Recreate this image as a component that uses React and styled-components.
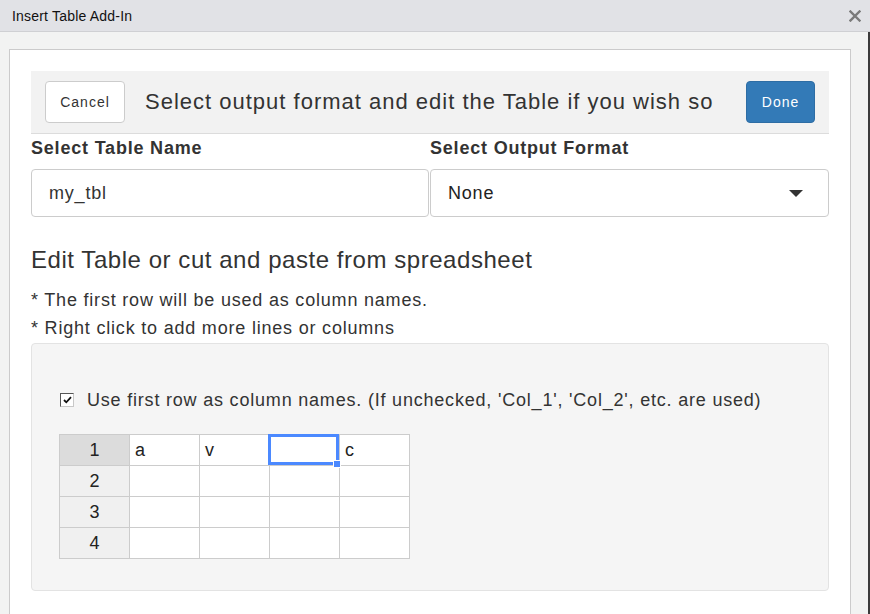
import React from 'react';
import styled, { createGlobalStyle } from 'styled-components';

const GlobalStyle = createGlobalStyle`
  html, body {
    margin: 0;
    padding: 0;
    height: 100%;
    overflow: hidden;
    background: #f2f3f2;
  }
  #root {
    height: 100%;
  }
  * {
    box-sizing: border-box;
  }
`;

const rows = [
  ['a', 'v', '', 'c'],
  ['', '', '', ''],
  ['', '', '', ''],
  ['', '', '', ''],
];

function App() {
  return (
    <Window>
      <GlobalStyle />
      <TitleBar>
        <TitleText>Insert Table Add-In</TitleText>
        <CloseButton>
          <svg width="12" height="12" viewBox="0 0 12 12">
            <path d="M1.5 1.5 L10.5 10.5 M10.5 1.5 L1.5 10.5" stroke="#7a7a7a" strokeWidth="2.4" strokeLinecap="square" />
          </svg>
        </CloseButton>
      </TitleBar>

      <Frame>
        <Panel>
          {/* top bar with the two buttons */}
          <Toolbar>
            <CancelButton>Cancel</CancelButton>
            <ToolbarTitle>Select output format and edit the Table if you wish so</ToolbarTitle>
            <DoneButton>Done</DoneButton>
          </Toolbar>

          <FieldGrid>
            <Field>
              <Label>Select Table Name</Label>
              <TextInput>my_tbl</TextInput>
            </Field>
            <Field>
              <Label>Select Output Format</Label>
              <SelectBox>
                <span>None</span>
                <Caret />
              </SelectBox>
            </Field>
          </FieldGrid>

          <Heading>Edit Table or cut and paste from spreadsheet</Heading>
          <Notes>
            <Note>* The first row will be used as column names.</Note>
            <Note>* Right click to add more lines or columns</Note>
          </Notes>

          {/* table editor */}
          <Well>
            <CheckRow>
              <CheckBox>
                <svg width="9" height="8" viewBox="0 0 9 8">
                  <path d="M1 4 L3.3 6.3 L8 1.2" stroke="#111" strokeWidth="1.8" fill="none" />
                </svg>
              </CheckBox>
              <span>Use first row as column names. (If unchecked, 'Col_1', 'Col_2', etc. are used)</span>
            </CheckRow>

            <Grid>
              <tbody>
                {rows.map((row, r) => (
                  <tr key={r}>
                    <RowHead $active={r === 0}>{r + 1}</RowHead>
                    {row.map((val, c) => (
                      <Cell key={c}>
                        {val}
                        {r === 0 && c === 2 && (
                          <Selection>
                            <Handle />
                          </Selection>
                        )}
                      </Cell>
                    ))}
                  </tr>
                ))}
              </tbody>
            </Grid>
          </Well>
        </Panel>
      </Frame>
    </Window>
  );
}

export default App;

const Window = styled.div`
  height: 100%;
  display: flex;
  flex-direction: column;
  font-family: "Liberation Sans", Arial, sans-serif;
  color: #333;
`;

const TitleBar = styled.div`
  height: 32px;
  flex: none;
  display: flex;
  align-items: center;
  justify-content: space-between;
  padding: 0 9px 0 12px;
  background: #e1e2e6;
  border-bottom: 1px solid #cfd0d3;
`;

const TitleText = styled.div`
  font-family: "Liberation Sans", sans-serif;
  font-size: 14px;
  letter-spacing: 0.2px;
  color: #111;
  margin-top: 1px;
`;

const CloseButton = styled.div`
  display: flex;
  align-items: center;
  margin-top: 1px;
`;

const Frame = styled.div`
  flex: 1;
  display: flex;
  padding: 17px 17px 0 9px;
  border-right: 2px solid #3b3b3b;
  min-height: 0;
`;

const Panel = styled.div`
  flex: 1;
  background: #fff;
  border: 1px solid #cbcbcb;
  border-bottom: none;
  padding: 21px 21px 0 21px;
`;

const Toolbar = styled.div`
  height: 63px;
  display: flex;
  align-items: center;
  padding: 0 14px;
  background: #f2f2f2;
  border-bottom: 1px solid #dcdcdc;
`;

const BaseButton = styled.div`
  height: 42px;
  display: flex;
  align-items: center;
  justify-content: center;
  border-radius: 4px;
  font-size: 14px;
  letter-spacing: 1px;
`;

const CancelButton = styled(BaseButton)`
  width: 80px;
  background: #fff;
  border: 1px solid #ccc;
  color: #333;
`;

const DoneButton = styled(BaseButton)`
  width: 69px;
  background: #337ab7;
  border: 1px solid #2e6da4;
  color: #fff;
`;

const ToolbarTitle = styled.div`
  flex: 1;
  margin-left: 20px;
  font-size: 22px;
  letter-spacing: 1px;
  color: #333;
`;

const FieldGrid = styled.div`
  display: grid;
  grid-template-columns: 398px 399px;
  column-gap: 1px;
`;

const Field = styled.div`
  display: flex;
  flex-direction: column;
`;

const Label = styled.div`
  font-size: 18px;
  font-weight: bold;
  letter-spacing: 0.8px;
  line-height: 22px;
  margin: 3px 0 10px;
`;

const TextInput = styled.div`
  height: 48px;
  border: 1px solid #ccc;
  border-radius: 4px;
  display: flex;
  align-items: center;
  padding: 0 17px;
  font-size: 18px;
  letter-spacing: 0.8px;
  color: #333;
`;

const SelectBox = styled(TextInput)`
  justify-content: space-between;
  padding-right: 25px;
  color: #222;
`;

const Caret = styled.span`
  width: 0;
  height: 0;
  border-left: 7px solid transparent;
  border-right: 7px solid transparent;
  border-top: 7px solid #333;
`;

const Heading = styled.div`
  font-size: 24px;
  letter-spacing: 0.55px;
  line-height: 28px;
  margin-top: 29px;
`;

const Notes = styled.div`
  margin-top: 12px;
`;

const Note = styled.div`
  font-size: 18px;
  letter-spacing: 0.8px;
  line-height: 28px;
`;

const Well = styled.div`
  margin-top: 1px;
  height: 248px;
  background: #f5f5f5;
  border: 1px solid #e3e3e3;
  border-radius: 4px;
  padding: 43px 27px 0;
`;

const CheckRow = styled.div`
  display: flex;
  align-items: center;
  height: 26px;
  font-size: 18px;
  letter-spacing: 0.8px;
  padding-left: 1px;
`;

const CheckBox = styled.span`
  width: 14px;
  height: 14px;
  margin-right: 13px;
  background: #fff;
  border: 1px solid;
  border-color: #555 #c8c8c8 #c8c8c8 #555;
  display: flex;
  align-items: center;
  justify-content: center;
`;

const Grid = styled.table`
  margin-top: 21px;
  border-collapse: collapse;
  font-size: 18px;
  color: #222;
`;

const RowHead = styled.td`
  width: 70px;
  height: 31px;
  padding: 0;
  text-align: center;
  border: 1px solid #ccc;
  background: ${(p) => (p.$active ? '#dcdcdc' : '#f0f0f0')};
`;

const Cell = styled.td`
  position: relative;
  width: 70px;
  height: 31px;
  padding: 0 4px 0 5px;
  border: 1px solid #ccc;
  background: #fff;
`;

const Selection = styled.div`
  position: absolute;
  z-index: 2;
  left: -2px;
  top: -1px;
  right: 0;
  bottom: 0;
  border: 3px solid #4b89ff;
  border-width: 3px 3px 3px 3px;
`;

const Handle = styled.div`
  position: absolute;
  right: -5px;
  bottom: -6px;
  width: 8px;
  height: 8px;
  background: #4b89ff;
  border: 1px solid #fff;
`;
